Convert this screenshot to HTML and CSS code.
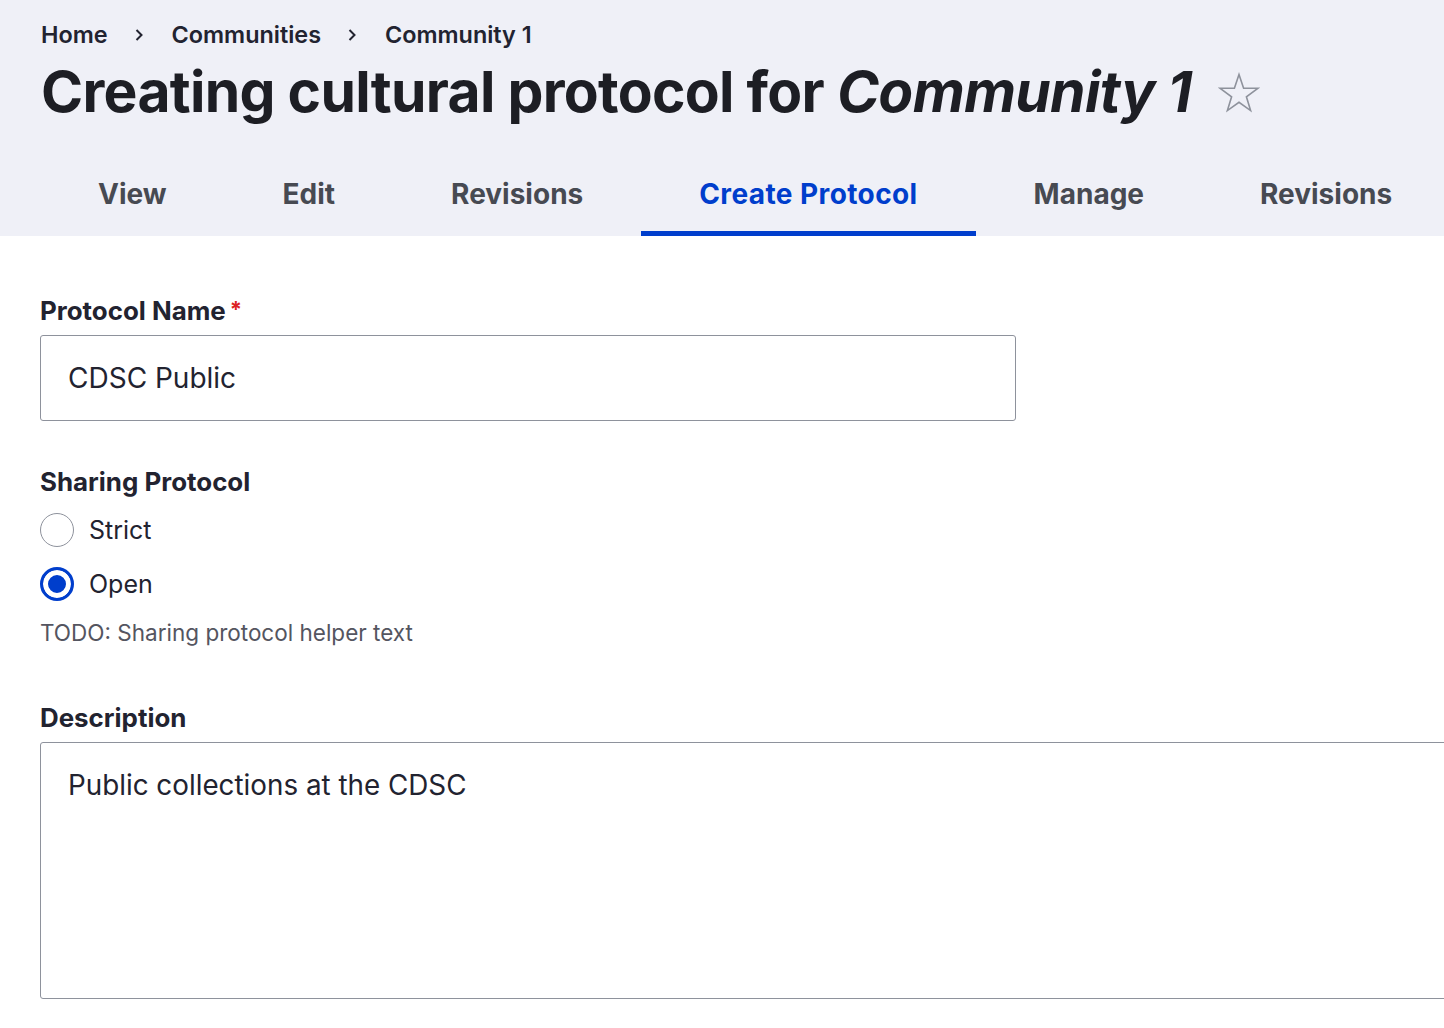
FILE: index.html
```html
<!DOCTYPE html>
<html lang="en">
<head>
<meta charset="utf-8">
<title>Creating cultural protocol for Community 1</title>
<link rel="stylesheet" href="styles.css">
</head>
<body>
<header class="page-header">
  <nav class="breadcrumb">
    <a href="#">Home</a>
    <svg class="sep" viewBox="0 0 10 14" width="10" height="14"><path d="M2.5 2 L7.5 7 L2.5 12" fill="none" stroke="#222330" stroke-width="2"/></svg>
    <a href="#">Communities</a>
    <svg class="sep" viewBox="0 0 10 14" width="10" height="14"><path d="M2.5 2 L7.5 7 L2.5 12" fill="none" stroke="#222330" stroke-width="2"/></svg>
    <a href="#">Community 1</a>
  </nav>
  <h1 class="title"><span>Creating cultural protocol for <em>Community 1</em></span><svg class="star" viewBox="0 0 42 42" width="42" height="42"><path d="M21 2.5 L25.6 16.2 L39.8 16.3 L28.4 24.8 L32.6 38.6 L21 30.3 L9.4 38.6 L13.6 24.8 L2.2 16.3 L16.4 16.2 Z" fill="none" stroke="#8e929c" stroke-width="1.6" stroke-linejoin="miter"/></svg></h1>
  <nav class="tabs">
    <a class="tab" href="#">View</a>
    <a class="tab" href="#">Edit</a>
    <a class="tab" href="#">Revisions</a>
    <a class="tab active" href="#">Create Protocol</a>
    <a class="tab" href="#">Manage</a>
    <a class="tab" href="#">Revisions</a>
  </nav>
</header>
<main class="content">
  <div class="field">
    <label class="label">Protocol Name<span class="req">*</span></label>
    <input class="text-input" type="text" value="CDSC Public">
  </div>
  <fieldset class="field radios">
    <legend class="label">Sharing Protocol</legend>
    <label class="radio-row"><input type="radio" name="share" class="radio"><span>Strict</span></label>
    <label class="radio-row"><input type="radio" name="share" class="radio" checked><span>Open</span></label>
    <div class="help">TODO: Sharing protocol helper text</div>
  </fieldset>
  <div class="field desc">
    <label class="label">Description</label>
    <textarea class="textarea">Public collections at the CDSC</textarea>
  </div>
</main>
</body>
</html>
```
FILE: styles.css
```css
html, body {
  margin: 0;
  padding: 0;
  overflow: hidden;
  background: #ffffff;
}
body {
  font-family: Inter, "Noto Sans", "Liberation Sans", sans-serif;
  color: #222330;
}
a { text-decoration: none; color: inherit; }

.page-header {
  background: #eff0f7;
  padding: 20px 0 0 41px;
}
.breadcrumb {
  display: flex;
  align-items: center;
  font-size: 23.4px;
  font-weight: 600;
  line-height: 30px;
  color: #222330;
  white-space: nowrap;
}
.breadcrumb .sep {
  margin: 0 28px 0 26px;
  flex: none;
}
.title {
  margin: 7px 0 0 0;
  font-size: 57px;
  font-weight: 700;
  line-height: 70px;
  color: #1d1e24;
  letter-spacing: -0.7px;
  display: flex;
  align-items: center;
  white-space: nowrap;
}
.title em {
  font-style: italic;
}
.title .star {
  margin-left: 27px;
  margin-top: 2px;
  flex: none;
}
.tabs {
  display: flex;
  margin-top: 25px;
  margin-left: -1px;
  white-space: nowrap;
}
.tab {
  display: block;
  flex: none;
  padding: 24px 58px;
  font-size: 28px;
  line-height: 36px;
  font-weight: 700;
  color: #474a52;
  position: relative;
}
.tab.active {
  color: #003ecc;
  letter-spacing: 0.4px;
}
.tab.active::after {
  content: "";
  position: absolute;
  left: 0;
  right: 0;
  bottom: 0;
  height: 5px;
  background: #003ecc;
}

.content {
  padding: 58px 0 0 40px;
}
.field {
  margin: 0;
}
.label {
  display: block;
  font-size: 25.9px;
  line-height: 30px;
  font-weight: 700;
  color: #222330;
  margin-bottom: 9px;
  padding: 0;
}
.req {
  color: #dc2323;
  margin-left: 4px;
  font-size: 22px;
  vertical-align: 3px;
}
.text-input {
  box-sizing: border-box;
  display: block;
  width: 976px;
  height: 86px;
  border: 1px solid #8e929c;
  border-radius: 3px;
  padding: 0 27px;
  font-family: inherit;
  font-size: 28px;
  color: #222330;
  background: #fff;
  margin: 0;
}
.radios {
  border: 0;
  margin: 46px 0 0 0;
  padding: 0;
  min-width: 0;
}
.radios .label {
  margin-bottom: 16px;
}
.radio-row {
  display: flex;
  align-items: center;
  gap: 15px;
  height: 34px;
  margin-bottom: 20px;
  font-size: 25px;
  color: #222330;
}
.radio {
  appearance: none;
  -webkit-appearance: none;
  box-sizing: border-box;
  width: 34px;
  height: 34px;
  margin: 0;
  border: 1px solid #8e929c;
  border-radius: 50%;
  background: #fff;
  flex: none;
}
.radio:checked {
  border: 3px solid #003ecc;
  background: #003ecc;
  box-shadow: inset 0 0 0 5px #fff;
}
.help {
  margin-top: -3px;
  font-size: 22.5px;
  line-height: 30px;
  color: #545560;
}
.desc {
  margin-top: 55px;
}
.textarea {
  box-sizing: border-box;
  display: block;
  width: 1500px;
  height: 257px;
  border: 1px solid #8e929c;
  border-radius: 3px;
  padding: 24px 27px;
  font-family: inherit;
  font-size: 27.8px;
  line-height: 36px;
  color: #222330;
  background: #fff;
  resize: none;
  margin: 0;
}
```
